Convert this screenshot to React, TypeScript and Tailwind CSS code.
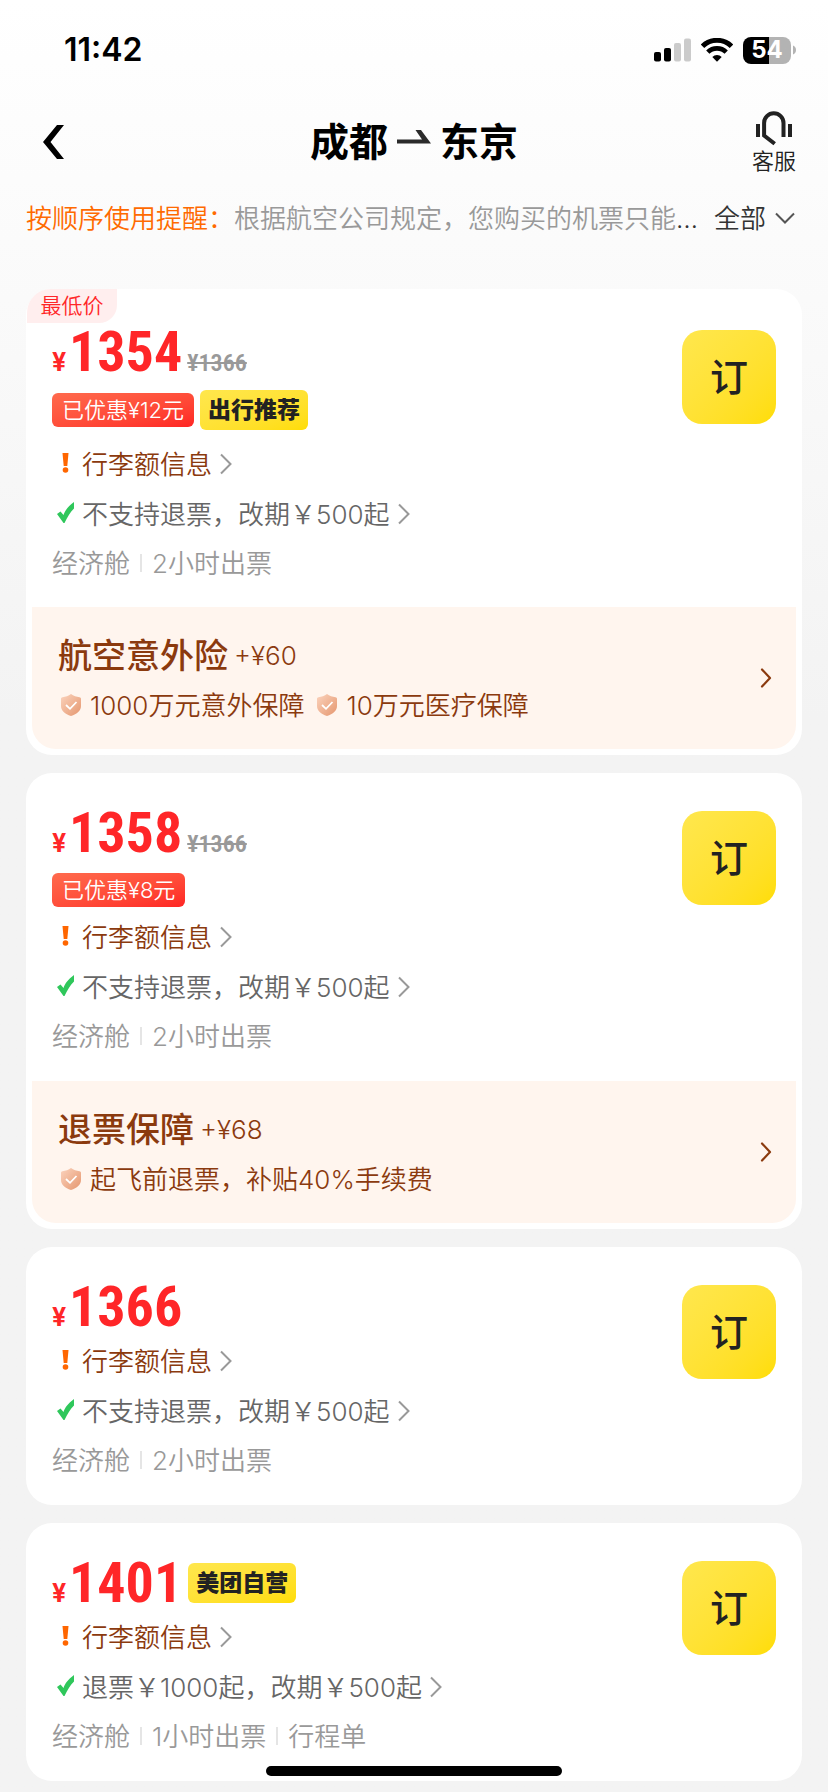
import React from 'react';

type Insurance = { title: string; price: string; benefits: string[] };

type Offer = {
  price: string;
  original?: string;
  discount?: string;
  tagBadge?: string;
  priceBadge?: string;
  lowest?: boolean;
  rule: string;
  notes: string[];
  insurance?: Insurance;
};

const offers: Offer[] = [
  {
    price: '1354',
    original: '¥1366',
    discount: '已优惠¥12元',
    tagBadge: '出行推荐',
    lowest: true,
    rule: '不支持退票，改期￥500起',
    notes: ['经济舱', '2小时出票'],
    insurance: { title: '航空意外险', price: '+¥60', benefits: ['1000万元意外保障', '10万元医疗保障'] },
  },
  {
    price: '1358',
    original: '¥1366',
    discount: '已优惠¥8元',
    rule: '不支持退票，改期￥500起',
    notes: ['经济舱', '2小时出票'],
    insurance: { title: '退票保障', price: '+¥68', benefits: ['起飞前退票，补贴40%手续费'] },
  },
  {
    price: '1366',
    rule: '不支持退票，改期￥500起',
    notes: ['经济舱', '2小时出票'],
  },
  {
    price: '1401',
    priceBadge: '美团自营',
    rule: '退票￥1000起，改期￥500起',
    notes: ['经济舱', '1小时出票', '行程单'],
  },
];

function StatusBar() {
  return (
    <div className="flex h-[100px] items-center justify-between pr-8 pl-16">
      <span className="text-[32px] font-semibold text-black">11:42</span>
      <div className="flex items-center gap-[10px]">
        <svg width="37" height="24" viewBox="0 0 37 24" aria-hidden="true">
          <rect x="0" y="14" width="7" height="9.5" rx="2" fill="#000" />
          <rect x="10" y="10" width="7" height="13.5" rx="2" fill="#000" />
          <rect x="20" y="5" width="7" height="18.5" rx="2" fill="#cbcbcb" />
          <rect x="30" y="0.5" width="7" height="23" rx="2" fill="#cbcbcb" />
        </svg>
        <svg width="32" height="24" viewBox="0 0 32 24" aria-hidden="true">
          <path d="M1.5 8.200a20.800 20.800 0 0 1 29 0" fill="none" stroke="#000" strokeWidth="5" />
          <path d="M6.800 14.200a13 13 0 0 1 18.400 0" fill="none" stroke="#000" strokeWidth="4.600" />
          <path d="M11.300 19a6.800 6.800 0 0 1 9.400 0L16 23.800z" fill="#000" />
        </svg>
        <div className="flex items-center gap-[2px]">
          <div className="flex h-[27px] w-12 items-center justify-center rounded-lg bg-linear-to-r from-black from-54% to-[#b3b3b3] to-54% text-[24px] font-bold text-white">
            54
          </div>
          <svg width="3" height="10" viewBox="0 0 3 10" aria-hidden="true">
            <path d="M0 0.5c4 1.5 4 7.500 0 9z" fill="#b3b3b3" />
          </svg>
        </div>
      </div>
    </div>
  );
}

function Header() {
  return (
    <header className="grid h-[84px] grid-cols-[1fr_auto_1fr] items-center px-8">
      <button type="button" aria-label="返回" className="ml-[10px] justify-self-start">
        <svg width="23" height="36" viewBox="0 0 23 36" aria-hidden="true">
          <path d="M15 1h7L8.500 18 22 35h-7L1 18z" fill="#000" />
        </svg>
      </button>
      <h1 className="flex items-center gap-2 text-[39px] font-bold text-black">
        <span>成都</span>
        <svg width="36" height="24" viewBox="0 0 36 24" aria-hidden="true">
          <path d="M19.500 0h5.500L35 13.500H1v-4h25z" fill="#2b2b2b" />
        </svg>
        <span>东京</span>
      </h1>
      <button type="button" className="flex flex-col items-center justify-self-end text-[#222]">
        <svg width="38" height="36" viewBox="0 0 38 36" aria-hidden="true">
          <path d="M1 13h4v13H1zM33 13h4v13h-4z" fill="#222" />
          <path d="M28.500 26V12a9.700 9.700 0 0 0-19.400 0v12.500l10.600 8.300" fill="none" stroke="#222" strokeWidth="4" />
        </svg>
        <span className="mt-[2px] text-[22px] leading-6">客服</span>
      </button>
    </header>
  );
}

function Notice() {
  return (
    <div className="flex h-[68px] items-center pr-8 pl-[26px] text-[26px]">
      <p className="min-w-0 flex-1 truncate text-[#333]">
        <span className="text-[#ff6a00]">按顺序使用提醒：</span>
        <span className="text-[#999]">根据航空公司规定，您购买的机票只能</span>…
      </p>
      <button type="button" className="ml-3 flex shrink-0 items-center gap-2 text-[#333]">
        全部
        <svg width="22" height="14" viewBox="0 0 22 14" aria-hidden="true">
          <path d="M2 2.500l9 9 9-9" fill="none" stroke="#555" strokeWidth="2" />
        </svg>
      </button>
    </div>
  );
}

function Chevron() {
  return (
    <svg width="12" height="22" viewBox="0 0 12 22" aria-hidden="true">
      <path d="M1 1.500L10.500 11 1 20.500" fill="none" stroke="#999" strokeWidth="2" />
    </svg>
  );
}

function Shield({ id }: { id: string }) {
  return (
    <svg width="22" height="24" viewBox="0 0 22 24" aria-hidden="true">
      <defs>
        <linearGradient id={id} x1="0" y1="0" x2="1" y2="1">
          <stop offset="0" stopColor="#fbd3bd" />
          <stop offset="1" stopColor="#e5966e" />
        </linearGradient>
      </defs>
      <path
        d="M11 1c2.500 1.800 5.500 2.900 8.500 3.200.9.100 1.500.8 1.500 1.700V13c0 4.500-4 8.300-10 10C5 21.300 1 17.500 1 13V5.900c0-.9.600-1.600 1.500-1.700C5.500 3.900 8.500 2.800 11 1z"
        fill={`url(#${id})`}
      />
      <path d="M6 12l4 3.800L16.500 9" fill="none" stroke="#fff" strokeWidth="1.800" />
    </svg>
  );
}

function YellowBadge({ children }: { children: React.ReactNode }) {
  return (
    <span className="flex h-10 w-[108px] items-center justify-center rounded-md bg-linear-to-br from-[#ffe74d] to-[#ffdd00] text-[23px] font-black text-[#222]">
      {children}
    </span>
  );
}

function InsuranceBar({ insurance }: { insurance: Insurance }) {
  return (
    <button
      type="button"
      className="mx-[6px] mb-[6px] flex h-[142px] items-center justify-between rounded-b-3xl bg-[#fff5ee] pr-6 pl-[26px] text-left text-[#8b3a0e]"
    >
      <span className="flex flex-col gap-[2px] pt-1">
        <span className="flex h-12 items-center gap-[6px]">
          <span className="text-[34px] font-medium">{insurance.title}</span>
          <span className="text-[26px]">{insurance.price}</span>
        </span>
        <span className="flex h-12 items-center gap-3 pl-[2px]">
          {insurance.benefits.map((benefit) => (
            <span key={benefit} className="flex items-center gap-2 text-[26px]">
              <Shield id={`shield-${benefit.length}`} />
              {benefit}
            </span>
          ))}
        </span>
      </span>
      <svg width="12" height="20" viewBox="0 0 12 20" aria-hidden="true">
        <path d="M2 1.500l8 8.500-8 8.500" fill="none" stroke="#8b3a0e" strokeWidth="2.200" strokeLinecap="round" strokeLinejoin="round" />
      </svg>
    </button>
  );
}

function OfferCard({ offer }: { offer: Offer }) {
  return (
    <article className="relative flex flex-col rounded-[26px] bg-white">
      {offer.lowest && (
        <span className="absolute top-0 left-px flex h-[34px] w-[90px] items-center justify-center rounded-tl-3xl rounded-br-[18px] bg-[#ffeeee] text-[21px] text-[#ff2628]">
          最低价
        </span>
      )}
      <div className={offer.lowest ? 'flex justify-between px-[26px] pt-[41px] pb-5' : 'flex justify-between px-[26px] pt-[38px] pb-[21px]'}>
        <div className="min-w-0">
          <div className="flex h-[51px] items-start">
            <p className="flex items-baseline font-['Roboto_Condensed','Roboto',sans-serif] leading-[44px] font-bold text-[#ff2628]">
              <span className="w-[17px] font-['Inter'] text-[25px]">¥</span>
              <span className="text-[56px]">{offer.price}</span>
              {offer.original && <s className="ml-[5px] text-[24px] font-semibold text-[#999]">{offer.original}</s>}
            </p>
            {offer.priceBadge && (
              <span className="ml-[6px] pt-[2px]">
                <YellowBadge>{offer.priceBadge}</YellowBadge>
              </span>
            )}
          </div>
          {offer.discount && (
            <div className={offer.tagBadge ? 'flex h-[58px] items-center gap-[6px]' : 'flex h-[50px] items-center pt-[6px]'}>
              <span className="flex h-[34px] items-center rounded-md bg-linear-to-br from-[#ff6a4d] to-[#ff2424] px-[10px] text-[22px] text-white">
                {offer.discount}
              </span>
              {offer.tagBadge && <YellowBadge>{offer.tagBadge}</YellowBadge>}
            </div>
          )}
          <button type="button" className="flex h-[50px] items-center text-[26px] text-[#8b3a0e]">
            <svg className="mr-[2px]" width="28" height="24" viewBox="0 0 28 24" aria-hidden="true">
              <path d="M10.500 1h6l-1.200 13h-3.600z" fill="#ff6600" />
              <circle cx="13.500" cy="18" r="2.800" fill="#ff6600" />
            </svg>
            <span className="mr-2">行李额信息</span>
            <Chevron />
          </button>
          <button type="button" className="flex h-[50px] items-center text-[26px] text-[#666]">
            <svg className="mr-[2px]" width="28" height="24" viewBox="0 0 28 24" aria-hidden="true">
              <path d="M5 12l3.500-2.500 3 3.500C13 8.500 16 4.500 22 0v6.500C18 10.500 15.500 15 12.500 21h-1z" fill="#2fc75b" />
            </svg>
            <span className="mr-2">{offer.rule}</span>
            <Chevron />
          </button>
          <ul className="flex h-12 items-center text-[26px] text-[#999]">
            {offer.notes.map((note, index) => (
              <li key={note} className="flex items-center">
                {index > 0 && <span className="mx-[10px] h-[18px] w-[2px] bg-[#e5e5e5]" />}
                {note}
              </li>
            ))}
          </ul>
        </div>
        <button
          type="button"
          className="size-[94px] shrink-0 rounded-[20px] bg-linear-to-br from-[#ffe74d] to-[#ffdd00] text-[38px] font-medium text-[#222]"
        >
          订
        </button>
      </div>
      {offer.insurance && <InsuranceBar insurance={offer.insurance} />}
    </article>
  );
}

export default function App() {
  return (
    <div className="min-h-screen bg-[#f3f3f3] bg-linear-to-b from-white to-[#f3f3f3] to-[720px] pb-[11px] font-['Inter','Noto_Sans_CJK_SC',sans-serif] font-[350]">
      <StatusBar />
      <Header />
      <Notice />
      <main className="mt-[37px] flex flex-col gap-[18px] px-[26px]">
        {offers.map((offer) => (
          <OfferCard key={offer.price} offer={offer} />
        ))}
      </main>
      <div className="fixed bottom-4 left-1/2 h-[10px] w-[296px] -translate-x-1/2 rounded-full bg-black" />
    </div>
  );
}
